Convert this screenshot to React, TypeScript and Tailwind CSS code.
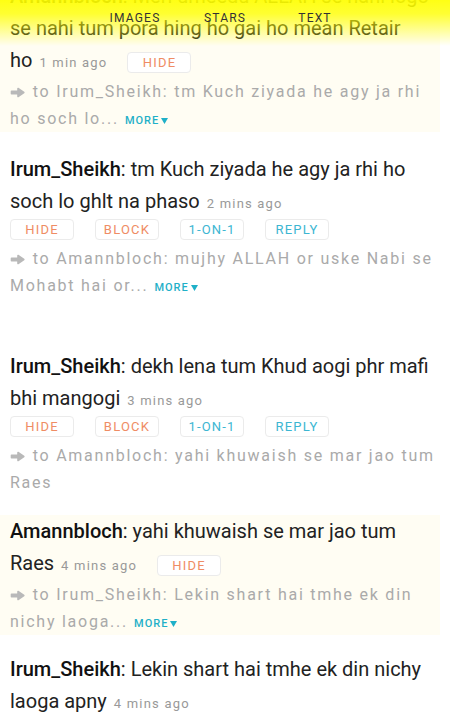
import React from "react";

type Msg = {
  user: string;
  text: string[];
  time: string;
  buttons: string[];
  inline: boolean;
  sub: string;
  more: boolean;
  cream: boolean;
  gap: string;
};

const msgs: Msg[] = [
  {
    user: "Amannbloch",
    text: ["Meri umeedu ALLAH se nahi logo se nahi tum pora hing ho gai ho mean Retair", "ho"],
    time: "1 min ago",
    buttons: ["HIDE"],
    inline: true,
    sub: "Irum_Sheikh: tm Kuch ziyada he agy ja rhi ho soch lo...",
    more: true,
    cream: true,
    gap: "mb-[21px]",
  },
  {
    user: "Irum_Sheikh",
    text: ["tm Kuch ziyada he agy ja rhi ho soch lo ghlt na phaso"],
    time: "2 mins ago",
    buttons: ["HIDE", "BLOCK", "1-ON-1", "REPLY"],
    inline: false,
    sub: "Amannbloch: mujhy ALLAH or uske Nabi se Mohabt hai or...",
    more: true,
    cream: false,
    gap: "mb-[51px]",
  },
  {
    user: "Irum_Sheikh",
    text: ["dekh lena tum Khud aogi phr mafi bhi mangogi"],
    time: "3 mins ago",
    buttons: ["HIDE", "BLOCK", "1-ON-1", "REPLY"],
    inline: false,
    sub: "Amannbloch: yahi khuwaish se mar jao tum Raes",
    more: false,
    cream: false,
    gap: "mb-[19px]",
  },
  {
    user: "Amannbloch",
    text: ["yahi khuwaish se mar jao tum Raes"],
    time: "4 mins ago",
    buttons: ["HIDE"],
    inline: true,
    sub: "Irum_Sheikh: Lekin shart hai tmhe ek din nichy laoga...",
    more: true,
    cream: true,
    gap: "mb-[18px]",
  },
  {
    user: "Irum_Sheikh",
    text: ["Lekin shart hai tmhe ek din nichy laoga apny"],
    time: "4 mins ago",
    buttons: ["HIDE", "BLOCK", "1-ON-1", "REPLY"],
    inline: false,
    sub: "Amannbloch: Kabhi nahi",
    more: false,
    cream: false,
    gap: "mb-[21px]",
  },
];

function Btn({ label }: { label: string }) {
  const teal = label === "1-ON-1" || label === "REPLY";
  return (
    <span
      className={
        "inline-block w-[64px] h-[21px] leading-[19px] border border-[#ebebeb] rounded-[4px] text-center text-[13px] tracking-[1.2px] font-normal bg-white " +
        (teal ? "text-[#3cb6d2]" : "text-[#ef8c64]")
      }
    >
      {label}
    </span>
  );
}

function Arrow() {
  return (
    <svg
      width="15"
      height="11"
      viewBox="0 0 15 11"
      className="inline-block mr-[2px] align-[-1px]"
    >
      <path
        d="M1.5 4.2 H8 V1.5 L13.8 5.5 L8 9.5 V6.8 H1.5 Z"
        fill="#b9b9b9"
        stroke="#b9b9b9"
        strokeWidth="1.6"
        strokeLinejoin="round"
      />
    </svg>
  );
}

function Message({ m }: { m: Msg }) {
  return (
    <div
      className={
        "pl-[10px] pr-[4px] mr-[10px] " + (m.cream ? "bg-[#fffdf3] " : "") + m.gap
      }
    >
      <p className="text-[20px] leading-[32px] text-[#222]">
        <span className="font-medium text-[#111]">{m.user}</span>: {m.text[0]}
        {m.text.length > 1 && (
          <>
            <br />
            {m.text[1]}
          </>
        )}{" "}
        <span className="text-[13px] leading-none tracking-[1.2px] text-[#999] ml-[2px]">{m.time}</span>
        {m.inline && (
          <span className="inline-flex gap-[21px] ml-[20px] leading-none">
            {m.buttons.map((b) => (
              <Btn key={b} label={b} />
            ))}
          </span>
        )}
      </p>
      {!m.inline && (
        <div className="flex gap-[21px] mt-[2px]">
          {m.buttons.map((b) => (
            <Btn key={b} label={b} />
          ))}
        </div>
      )}
      <p
        className={
          "text-[16px] leading-[27px] tracking-[1.75px] text-[#aaa] " +
          (m.inline ? "mt-[2px]" : "mt-[5px]")
        }
      >
        <Arrow /> to {m.sub}
        {m.more && (
          <span className="ml-[6px] text-[11px] leading-none tracking-[1px] text-[#1fb0c8] font-medium">
            MORE
            <svg width="7" height="6" viewBox="0 0 7 6" className="inline-block ml-[2px] align-[0px]">
              <path d="M0 0 L7 0 L3.5 6 Z" fill="#1fb0c8" />
            </svg>
          </span>
        )}
      </p>
    </div>
  );
}

export default function App() {
  return (
    <div className="relative w-[450px] h-[712px] overflow-hidden bg-white font-['Roboto',sans-serif]">
      <div className="-mt-[20px]">
        {msgs.map((m, i) => (
          <Message key={i} m={m} />
        ))}
      </div>
      <div className="absolute top-0 left-0 right-0 h-[46px] bg-[linear-gradient(to_bottom,rgba(255,255,0,0.92)_0%,rgba(255,255,0,0.8)_30%,rgba(255,255,0,0)_100%)] pointer-events-none" />
      <div className="absolute top-[10px] left-0 right-0 flex justify-center">
        {["IMAGES", "STARS", "TEXT"].map((t) => (
          <span key={t} className="w-[90px] text-center text-[12px] leading-[16px] tracking-[1.2px] text-[#333]">
            {t}
          </span>
        ))}
      </div>
    </div>
  );
}
